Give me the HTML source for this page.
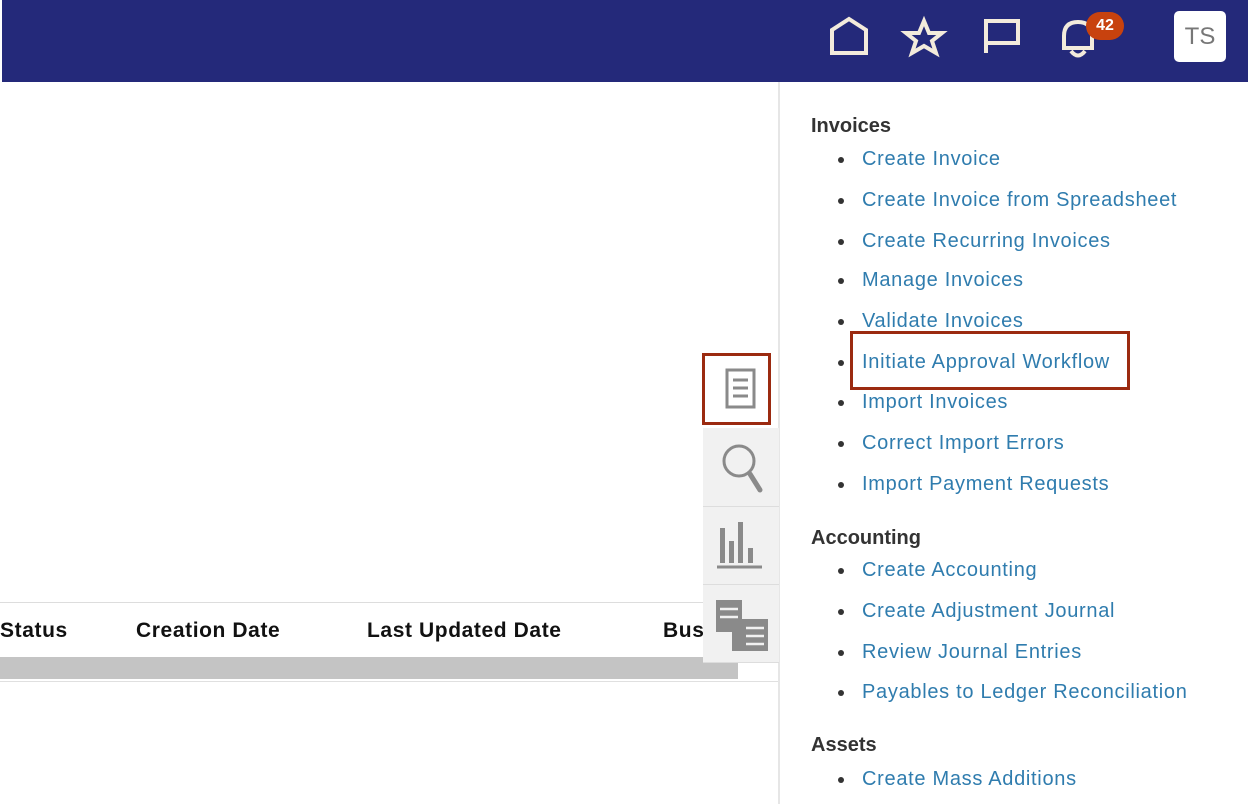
<!DOCTYPE html>
<html><head><style>
*{margin:0;padding:0;box-sizing:border-box}
body{width:1252px;height:804px;background:#fff;position:relative;overflow:hidden;font-family:"Liberation Sans",sans-serif}
.hdr{position:absolute;left:2px;top:0;width:1246px;height:82px;background:#24297a}
.ts{position:absolute;left:1172px;top:11px;width:52px;height:51px;background:#fff;border-radius:5px;color:#777;font-size:24px;text-align:center;line-height:51px}
.badge{position:absolute;left:1084px;top:12px;width:38px;height:28px;border-radius:14px;background:#c8420e;color:#fff;font-weight:bold;font-size:16px;text-align:center;line-height:28px}
.vline{position:absolute;left:778px;top:82px;width:2px;height:722px;background:#e6e6e6}
.h{position:absolute;left:811px;font-weight:bold;font-size:20px;color:#333}
.l{position:absolute;left:862px;font-size:20px;color:#2f7cae;letter-spacing:0.7px;white-space:nowrap}
.l:before{content:"";position:absolute;left:-24px;top:9px;width:6px;height:6px;border-radius:3px;background:#333}
.col{position:absolute;top:619px;font-weight:bold;font-size:21px;color:#111;letter-spacing:0.6px}
.tb{position:absolute;left:703px;width:76px;background:#f1f1f1;border-bottom:1px solid #ddd}
</style></head><body>
<div class="hdr">
<svg width="1246" height="82" style="position:absolute;left:0;top:0">
<g fill="none" stroke="#f3ebdc" stroke-width="4" stroke-linejoin="miter">
<path d="M830 53 V30 L847 19 L864 30 V53 Z"/>
<path d="M922 21 L927 33 L940 33 L930 41 L934 53 L922 46 L910 53 L914 41 L904 33 L917 33 Z"/>
<path d="M984 53 V21 H1016 V43 H984"/>
<path d="M1062 48 V36 Q1062 22 1076 22 Q1090 22 1090 36 V48 Z M1069 51 Q1076 60 1083 51"/>
</g></svg>
<div class="badge">42</div>
<div class="ts">TS</div>
</div>
<div class="vline"></div>
<div style="position:absolute;left:0;top:602px;width:703px;height:1px;background:#ddd"></div>
<div class="col" style="left:0">Status</div>
<div class="col" style="left:136px">Creation Date</div>
<div class="col" style="left:367px">Last Updated Date</div>
<div class="col" style="left:663px">Bus</div>
<div style="position:absolute;left:0;top:657px;width:738px;height:22px;background:#c4c4c4"></div>
<div style="position:absolute;left:0;top:681px;width:778px;height:1px;background:#e0e0e0"></div>
<div class="tb" style="top:428px;height:79px"></div>
<div class="tb" style="top:507px;height:78px"></div>
<div class="tb" style="top:585px;height:78px"></div>
<div style="position:absolute;left:702px;top:353px;width:69px;height:72px;border:3px solid #9b2a10;background:#fff"></div>
<svg width="1252" height="804" style="position:absolute;left:0;top:0">
<g fill="none" stroke="#8a8a8a" stroke-width="3">
<rect x="727" y="370" width="27" height="37"/>
<path d="M733 380 H748 M733 388 H748 M733 396 H748"/>
<circle cx="739" cy="461" r="15"/>
<path d="M750 474 L760 490" stroke-width="5" stroke-linecap="round"/>
<path d="M717 567 H762"/>
</g>
<g fill="#8a8a8a">
<rect x="720" y="528" width="5" height="35"/><rect x="729" y="541" width="5" height="22"/>
<rect x="738" y="522" width="5" height="41"/><rect x="748" y="548" width="5" height="15"/>
<rect x="716" y="600" width="26" height="32"/><rect x="732" y="619" width="36" height="32"/>
</g>
<g stroke="#f1f1f1" stroke-width="2.5"><path d="M720 609 H738 M720 617 H738 M746 628 H764 M746 636 H764 M746 644 H764"/></g>
</svg>
<div class="h" style="top:115px">Invoices</div>
<div class="l" style="top:148px">Create Invoice</div>
<div class="l" style="top:189px">Create Invoice from Spreadsheet</div>
<div class="l" style="top:230px">Create Recurring Invoices</div>
<div class="l" style="top:269px">Manage Invoices</div>
<div class="l" style="top:310px">Validate Invoices</div>
<div class="l" style="top:351px">Initiate Approval Workflow</div>
<div style="position:absolute;left:850px;top:331px;width:280px;height:59px;border:3px solid #9b2a10"></div>
<div class="l" style="top:391px">Import Invoices</div>
<div class="l" style="top:432px">Correct Import Errors</div>
<div class="l" style="top:473px">Import Payment Requests</div>
<div class="h" style="top:527px">Accounting</div>
<div class="l" style="top:559px">Create Accounting</div>
<div class="l" style="top:600px">Create Adjustment Journal</div>
<div class="l" style="top:641px">Review Journal Entries</div>
<div class="l" style="top:681px">Payables to Ledger Reconciliation</div>
<div class="h" style="top:734px">Assets</div>
<div class="l" style="top:768px">Create Mass Additions</div>
</body></html>
